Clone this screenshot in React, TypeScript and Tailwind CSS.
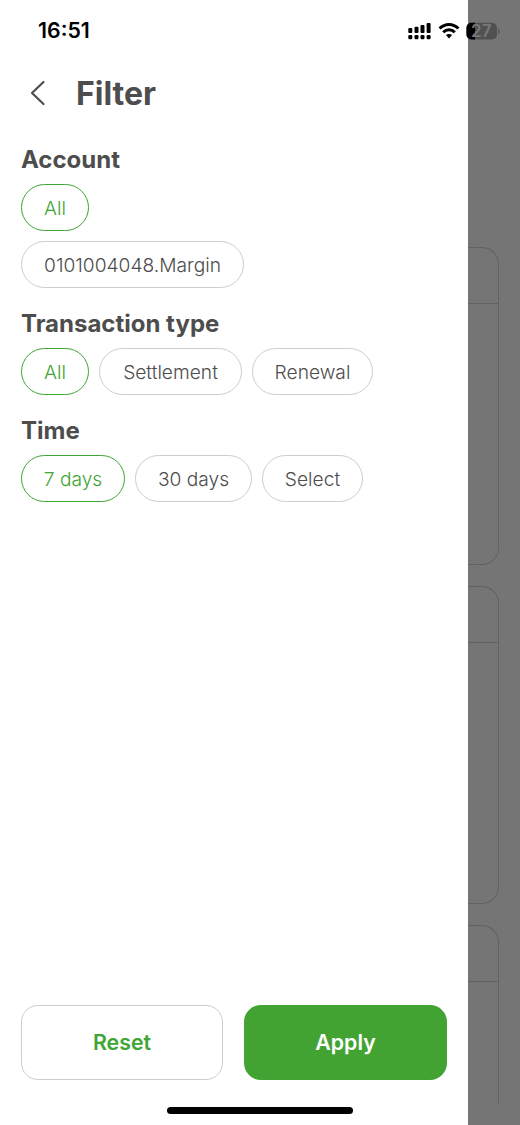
import React from "react";

interface ChipData {
  label: string;
  width: string;
  active?: boolean;
}

interface FilterGroupProps {
  title: string;
  className: string;
  rows: ChipData[][];
}

const accountRows: ChipData[][] = [
  [{ label: "All", width: "w-[68px]", active: true }],
  [{ label: "0101004048.Margin", width: "w-[223px]" }],
];

const transactionRows: ChipData[][] = [
  [
    { label: "All", width: "w-[68px]", active: true },
    { label: "Settlement", width: "w-[143px]" },
    { label: "Renewal", width: "w-[121px]" },
  ],
];

const timeRows: ChipData[][] = [
  [
    { label: "7 days", width: "w-[104px]", active: true },
    { label: "30 days", width: "w-[117px]" },
    { label: "Select", width: "w-[101px]" },
  ],
];

const Chip: React.FC<ChipData> = ({ label, width, active }) => (
  <button
    className={`h-[47px] pt-[2px] shrink-0 flex items-center justify-center rounded-full border text-[19.2px] font-light whitespace-nowrap ${width} ${
      active ? "border-[#3fa535] text-[#3fa535]" : "border-[#cdcdcd] text-[#4d4d4d]"
    }`}
  >
    {label}
  </button>
);

const FilterGroup: React.FC<FilterGroupProps> = ({ title, className, rows }) => (
  <section className={className}>
    <h2 className="text-[24px] leading-[30px] font-bold">{title}</h2>
    <div className="mt-[9px] flex flex-col gap-[10px]">
      {rows.map((row, idx) => (
        <div key={idx} className="flex gap-[10px]">
          {row.map((chip) => (
            <Chip key={chip.label} {...chip} />
          ))}
        </div>
      ))}
    </div>
  </section>
);

const StatusIcons = () => (
  <svg className="absolute left-[400px] top-[20px]" width="110" height="30" viewBox="0 0 110 30">
    {/* dual sim signal */}
    <g fill="#000">
      <rect x="8.3" y="8" width="4" height="5" rx="1" />
      <rect x="14.5" y="6.7" width="4" height="6.3" rx="1" />
      <rect x="20.5" y="5" width="4" height="8" rx="1" />
      <rect x="26.6" y="3" width="4" height="10" rx="1" />
      <rect x="8.3" y="15" width="4" height="4.3" rx="1.2" />
      <rect x="14.5" y="15" width="4" height="4.3" rx="1.2" />
      <rect x="20.5" y="15" width="4" height="4.3" rx="1.2" />
      <rect x="26.6" y="15" width="4" height="4.3" rx="1.2" />
    </g>
    {/* wifi */}
    <g fill="none" stroke="#000" strokeWidth="3">
      <path d="M39.6 8.5C45 3 53 3 58.4 8.5" />
      <path d="M43.2 12.3C46.5 9 51.5 9 54.8 12.3" />
    </g>
    <path d="M45.9 15.1c1.8-1.6 4.4-1.6 6.2 0L49 18.4z" fill="#000" />
    {/* battery */}
    <rect x="66.5" y="2.7" width="30.5" height="16.8" rx="5" fill="#505050" />
    <path d="M71.5 2.7H75v16.800h-3.500a5 5 0 0 1-5-5V7.700a5 5 0 0 1 5-5z" fill="#000" />
    <path d="M98 8.300c2.400.8 2.400 5.200 0 6z" fill="#585858" />
    <text x="81.300" y="17.200" textAnchor="middle" fontSize="17" fontWeight="600" fill="#777">
      27
    </text>
  </svg>
);

const Backdrop = () => (
  <div className="flex-1 h-full bg-[#757575] pt-[247px] pr-[21px] flex flex-col gap-[21px] overflow-hidden">
    <div className="h-[318px] shrink-0 rounded-r-[17px] border border-l-0 border-[#626262]">
      <div className="h-[56px] border-b border-[#626262]" />
    </div>
    <div className="h-[318px] shrink-0 rounded-r-[17px] border border-l-0 border-[#626262]">
      <div className="h-[56px] border-b border-[#626262]" />
    </div>
    <div className="h-[179px] shrink-0 rounded-tr-[17px] border-t border-r border-[#626262]">
      <div className="h-[56px] border-b border-[#626262]" />
    </div>
  </div>
);

const App: React.FC = () => {
  return (
    <div className="relative w-[520px] h-[1125px] flex overflow-hidden bg-white text-[#4d4d4d] font-['Inter',sans-serif]">
      <main className="w-[468px] h-full shrink-0 flex flex-col bg-white">
        <div className="h-[62px] pl-[38px] flex items-center text-[21.3px] font-semibold text-black">
          16:51
        </div>

        <header className="h-[62px] pl-[30px] flex items-center">
          <svg width="16" height="26" viewBox="0 0 16 26" fill="none" stroke="#4d4d4d" strokeWidth="2.2" strokeLinecap="round" strokeLinejoin="round">
            <path d="M13.500 2L2 13l11.500 11" />
          </svg>
          <h1 className="ml-[30px] pt-px text-[32px] leading-[40px] font-bold">Filter</h1>
        </header>

        <div className="px-[21px] pt-[21px] flex-1">
          <FilterGroup title="Account" className="" rows={accountRows} />
          <FilterGroup title="Transaction type" className="mt-[21px]" rows={transactionRows} />
          <FilterGroup title="Time" className="mt-[21px]" rows={timeRows} />
        </div>

        <footer className="pl-[21px] pb-[45px] flex gap-[21px]">
          <button className="w-[202px] h-[75px] rounded-[17px] border border-[#cdcdcd] text-[21.300px] font-semibold text-[#3fa535]">
            Reset
          </button>
          <button className="w-[203px] h-[75px] rounded-[17px] bg-[#42a332] text-[21.300px] font-semibold text-white">
            Apply
          </button>
        </footer>
      </main>

      <Backdrop />
      <StatusIcons />
      <div className="absolute left-[167px] top-[1107px] w-[186px] h-[7px] rounded-full bg-black" />
    </div>
  );
};

export default App;
